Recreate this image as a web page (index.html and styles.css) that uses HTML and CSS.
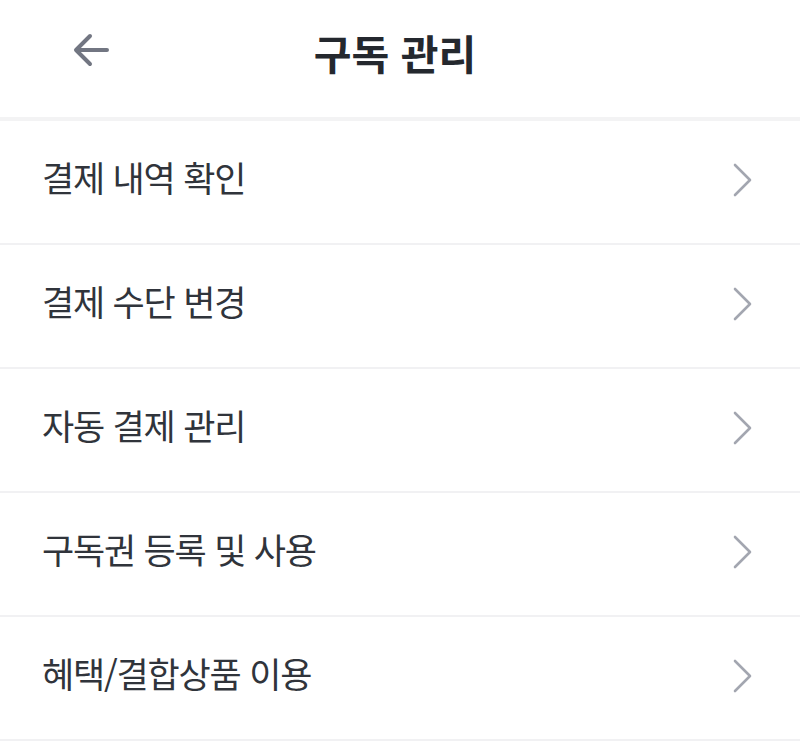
FILE: index.html
```html
<!DOCTYPE html>
<html lang="ko">
<head>
  <meta charset="UTF-8" />
  <meta name="viewport" content="width=device-width, initial-scale=1.0"/>
  <title>구독 관리</title>
  <link rel="stylesheet" href="styles.css">
</head>
<body>
  <div class="topbar">
    <span class="back">
      <svg width="44" height="44" viewBox="0 0 44 44">
        <path d="M38 22H8M21 8L7 22l14 14" fill="none" stroke="#727682" stroke-width="4" stroke-linecap="round" stroke-linejoin="round"/>
      </svg>
    </span>
    <div class="title">구독 관리</div>
  </div>

  <div class="menu-list">
    <div class="menu-item">
      <span>결제 내역 확인</span>
      <svg class="chev" width="24" height="36" viewBox="0 0 24 36"><path d="M5 3l15 15L5 33" fill="none" stroke="#a3a6b0" stroke-width="2.6" stroke-linecap="round" stroke-linejoin="round"/></svg>
    </div>
    <div class="menu-item">
      <span>결제 수단 변경</span>
      <svg class="chev" width="24" height="36" viewBox="0 0 24 36"><path d="M5 3l15 15L5 33" fill="none" stroke="#a3a6b0" stroke-width="2.6" stroke-linecap="round" stroke-linejoin="round"/></svg>
    </div>
    <div class="menu-item">
      <span>자동 결제 관리</span>
      <svg class="chev" width="24" height="36" viewBox="0 0 24 36"><path d="M5 3l15 15L5 33" fill="none" stroke="#a3a6b0" stroke-width="2.6" stroke-linecap="round" stroke-linejoin="round"/></svg>
    </div>
    <div class="menu-item">
      <span>구독권 등록 및 사용</span>
      <svg class="chev" width="24" height="36" viewBox="0 0 24 36"><path d="M5 3l15 15L5 33" fill="none" stroke="#a3a6b0" stroke-width="2.6" stroke-linecap="round" stroke-linejoin="round"/></svg>
    </div>
    <div class="menu-item">
      <span>혜택/결합상품 이용</span>
      <svg class="chev" width="24" height="36" viewBox="0 0 24 36"><path d="M5 3l15 15L5 33" fill="none" stroke="#a3a6b0" stroke-width="2.6" stroke-linecap="round" stroke-linejoin="round"/></svg>
    </div>
  </div>
</body>
</html>
```

FILE: styles.css
```css
body {
  font-family: "Noto Sans CJK KR", "Noto Sans", sans-serif;
  margin: 0;
  padding: 0;
  background: #ffffff;
}

.topbar {
  height: 117px;
  border-bottom: 4px solid #f3f3f4;
  display: flex;
  align-items: center;
  justify-content: center;
  position: relative;
}

.back {
  position: absolute;
  left: 69px;
  top: 28px;
  display: flex;
}

.title {
  font-size: 41px;
  line-height: 1;
  font-weight: bold;
  color: #24282e;
  margin-left: -10px;
  margin-top: -12px;
}

.menu-item {
  height: 122px;
  border-bottom: 2px solid #f1f1f3;
  display: flex;
  align-items: center;
  justify-content: space-between;
  padding: 0 46px 0 42px;
  font-size: 35px;
  line-height: 1;
  letter-spacing: -1.2px;
  color: #30343b;
}

.menu-item span {
  margin-top: -11px;
}

.chev {
  margin-top: -4px;
}
```
